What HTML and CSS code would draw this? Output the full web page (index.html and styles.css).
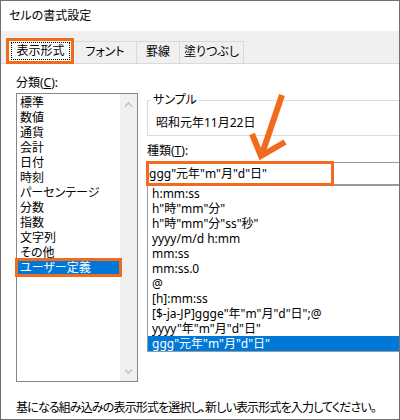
FILE: index.html
```
<!DOCTYPE html>
<html lang="ja">
<head>
<meta charset="utf-8">
<link rel="stylesheet" href="styles.css">
</head>
<body>
<div class="window">
  <div class="title">セルの書式設定</div>
  <div class="tabs">
    <div class="tab tab-active"><span class="focus">表示形式</span></div>
    <div class="tab tab-font">フォント</div>
    <div class="tab tab-border">罫線</div>
    <div class="tab tab-fill">塗りつぶし</div>
  </div>
  <div class="panel">
    <div class="cols">
      <div class="col-left">
        <div class="label">分類(<u>C</u>):</div>
        <div class="listbox">
          <ul class="items">
            <li>標準</li>
            <li>数値</li>
            <li>通貨</li>
            <li>会計</li>
            <li>日付</li>
            <li>時刻</li>
            <li>パーセンテージ</li>
            <li>分数</li>
            <li>指数</li>
            <li>文字列</li>
            <li>その他</li>
            <li class="sel marked">ユーザー定義</li>
          </ul>
          <div class="scrollbar">
            <svg class="sb-btn" width="17" height="17" viewBox="0 0 17 17"><polyline points="5,12.5 8.5,9 12,12.5" fill="none" stroke="#c4c4c4" stroke-width="1.6"/></svg>
            <svg class="sb-btn" width="17" height="17" viewBox="0 0 17 17"><polyline points="5,5.5 8.5,9 12,5.5" fill="none" stroke="#c4c4c4" stroke-width="1.6"/></svg>
          </div>
        </div>
      </div>
      <div class="col-right">
        <fieldset class="sample">
          <legend>サンプル</legend>
          <div class="sample-text">昭和元年11月22日</div>
        </fieldset>
        <div class="label label-type">種類(<u>T</u>):</div>
        <div class="input-wrap">
          <div class="input">ggg"元年"m"月"d"日"</div>
          <div class="mark-box"></div>
        </div>
        <ul class="typelist">
          <li>h:mm:ss</li>
          <li>h"時"mm"分"</li>
          <li>h"時"mm"分"ss"秒"</li>
          <li>yyyy/m/d h:mm</li>
          <li>mm:ss</li>
          <li>mm:ss.0</li>
          <li>@</li>
          <li>[h]:mm:ss</li>
          <li>[$-ja-JP]ggge"年"m"月"d"日";@</li>
          <li>yyyy"年"m"月"d"日"</li>
          <li class="sel">ggg"元年"m"月"d"日"</li>
        </ul>
      </div>
    </div>
    <div class="hint">基になる組み込みの表示形式を選択し、新しい表示形式を入力してください。</div>
  </div>
  <svg class="arrow" width="400" height="420" viewBox="0 0 400 420">
    <line x1="282" y1="95" x2="262" y2="154" stroke="#f26a1b" stroke-width="6"/>
    <polyline points="252,134 261,156 285,142" fill="none" stroke="#f26a1b" stroke-width="6" stroke-linejoin="miter"/>
  </svg>
</div>
</body>
</html>
```
FILE: styles.css
```
* {
  box-sizing: border-box;
}

body {
  margin: 0;
  font-family: "Noto Sans", "Noto Sans CJK JP", sans-serif;
  font-size: 12px;
  font-feature-settings: "palt";
  color: #000;
  background: #fff;
}

.window {
  position: relative;
  width: 400px;
  height: 420px;
  border: 1px solid #707070;
  background: #fff;
  overflow: hidden;
}

.title {
  height: 30px;
  line-height: 30px;
  padding-left: 8px;
}

.tabs {
  display: flex;
  align-items: flex-end;
  height: 33px;
  padding-left: 5px;
  background: #f0f0f0;
  border-bottom: 1px solid #d9d9d9;
}

.tab {
  height: 22px;
  line-height: 20px;
  text-align: center;
  background: #f0f0f0;
  border-top: 1px solid #d9d9d9;
  border-right: 1px solid #d9d9d9;
  white-space: nowrap;
}

.tab-active {
  position: relative;
  z-index: 1;
  width: 68px;
  height: 26px;
  margin-bottom: -1px;
  padding: 1px 1px 1px 2px;
  background: #fff;
  border: 3px solid #f26a1b;
}

.focus {
  display: block;
  height: 18px;
  line-height: 16px;
  border: 1px dotted #000;
  text-align: center;
}

.tab-font {
  width: 63px;
}

.tab-border {
  width: 43px;
}

.tab-fill {
  width: 64px;
}

.panel {
  padding-left: 15px;
}

.cols {
  display: flex;
  padding-top: 11px;
}

.col-left {
  width: 122px;
  flex: none;
}

.label {
  line-height: 15px;
  margin-bottom: 3px;
}

.listbox {
  display: flex;
  height: 289px;
  border: 1px solid #828790;
}

.items {
  flex: 1;
  list-style: none;
  margin: 0;
  padding: 1px 0 0 0;
}

.items li,
.typelist li {
  line-height: 15px;
  padding-left: 3px;
  white-space: nowrap;
}

.sel {
  background: #0078d7;
  color: #fff;
}

.marked {
  position: relative;
  z-index: 2;
  outline: 3px solid #f26a1b;
  outline-offset: -1px;
}

.scrollbar {
  width: 17px;
  flex: none;
  display: flex;
  flex-direction: column;
  justify-content: space-between;
  background: #f0f0f0;
}

.sb-btn {
  display: block;
}

.col-right {
  width: 300px;
  flex: none;
  margin-left: 9px;
}

.sample {
  margin: 18px 0 0 0;
  padding: 0 0 5px 3px;
  border: 1px solid #dcdcdc;
  min-width: 0;
}

.sample legend {
  padding: 0 2px;
  line-height: 14px;
}

.sample-text {
  margin-top: 8px;
  padding-left: 5px;
  line-height: 15px;
}

.label-type {
  margin-top: 7px;
  margin-bottom: 0;
}

.input-wrap {
  position: relative;
  margin-top: 4px;
}

.input {
  height: 23px;
  line-height: 21px;
  padding-left: 1px;
  border: 1px solid #9a9a9a;
  white-space: nowrap;
}

.mark-box {
  position: absolute;
  left: -1px;
  top: -1px;
  width: 188px;
  height: 25px;
  border: 3px solid #f26a1b;
}

.typelist {
  list-style: none;
  margin: 0;
  padding: 0;
  border: 1px solid #9a9a9a;
}

.typelist li {
  padding-left: 4px;
}

.hint {
  margin-top: 18px;
  line-height: 15px;
  letter-spacing: -0.85px;
  white-space: nowrap;
}

.arrow {
  position: absolute;
  left: -1px;
  top: -1px;
  pointer-events: none;
}
```
